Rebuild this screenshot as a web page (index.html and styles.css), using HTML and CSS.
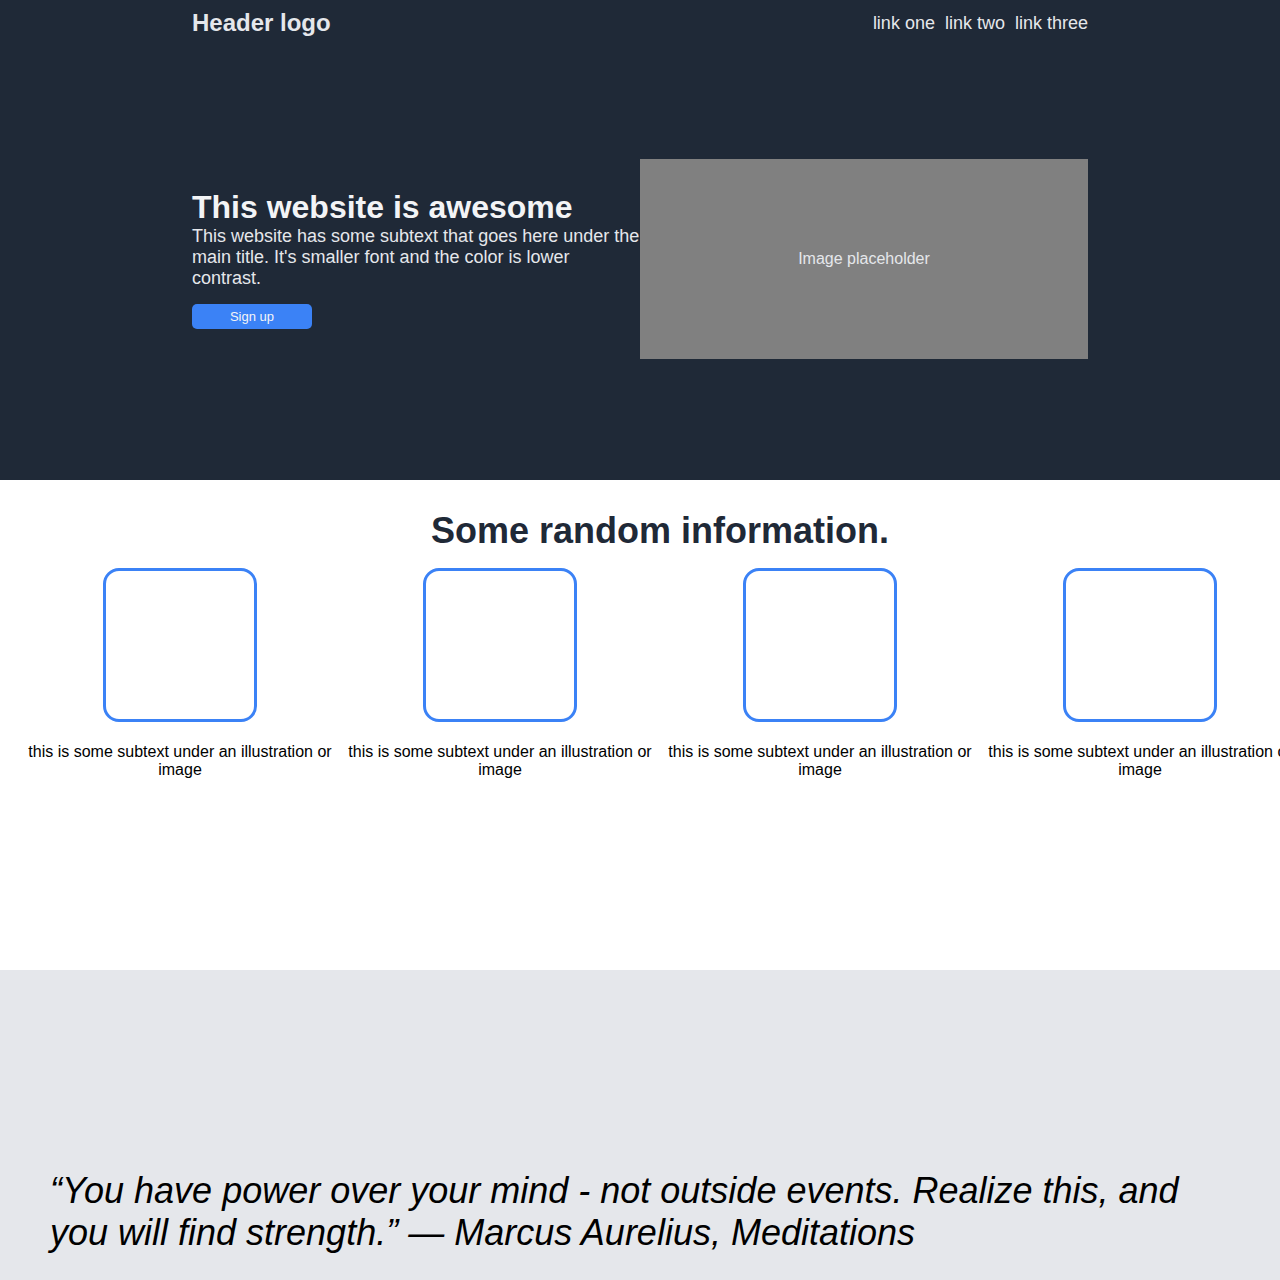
FILE: index.html
```html
<!DOCTYPE html>
<html lang="en">
<head>
<meta charset="utf-8">
<title>Landing page</title>
<link rel="stylesheet" href="styles.css">
</head>
<body>
<header class="top">
  <div class="container nav">
    <div class="logo">Header logo</div>
    <nav class="links">
      <a href="#">link one</a>
      <a href="#">link two</a>
      <a href="#">link three</a>
    </nav>
  </div>
  <div class="container hero">
    <div class="hero-text">
      <h1 class="hero-title">This website is awesome</h1>
      <p class="hero-sub">This website has some subtext that goes here under the main title. It's smaller font and the color is lower contrast.</p>
      <button class="signup">Sign up</button>
    </div>
    <div class="hero-image">Image placeholder</div>
  </div>
</header>
<section class="info">
  <h2 class="info-title">Some random information.</h2>
  <div class="info-items">
    <div class="item"><div class="box"></div><p class="item-text">this is some subtext under an illustration or image</p></div>
    <div class="item"><div class="box"></div><p class="item-text">this is some subtext under an illustration or image</p></div>
    <div class="item"><div class="box"></div><p class="item-text">this is some subtext under an illustration or image</p></div>
    <div class="item"><div class="box"></div><p class="item-text">this is some subtext under an illustration or image</p></div>
  </div>
</section>
<section class="quote-section">
  <p class="quote">“You have power over your mind - not outside events. Realize this, and you will find strength.” — Marcus Aurelius, Meditations</p>
</section>
</body>
</html>
```
FILE: styles.css
```css
html, body {
  margin: 0;
  padding: 0;
  overflow-x: hidden;
}
body {
  font-family: "Liberation Sans", Arial, sans-serif;
  color: #000;
}
.top {
  background: #1f2937;
  height: 480px;
}
.container {
  width: 896px;
  margin: 0 auto;
}
.nav {
  display: flex;
  justify-content: space-between;
  align-items: center;
  height: 44px;
  padding-top: 1px;
  box-sizing: border-box;
}
.logo {
  font-size: 24px;
  font-weight: bold;
  color: #e5e7eb;
}
.links {
  display: flex;
  gap: 10px;
  padding-top: 2px;
}
.links a {
  color: #e5e7eb;
  font-size: 18px;
  text-decoration: none;
}
.hero {
  display: flex;
  align-items: center;
  padding-top: 115px;
}
.hero-text {
  width: 448px;
}
.hero-title {
  margin: 0;
  font-size: 32px;
  font-weight: bold;
  color: #f3f4f6;
  line-height: 37px;
}
.hero-sub {
  margin: 0 0 15px;
  font-size: 18px;
  line-height: 21px;
  color: #e5e7eb;
}
.signup {
  width: 120px;
  height: 25px;
  border: none;
  border-radius: 5px;
  background: #3b82f6;
  color: #f3f4f6;
  font-family: "Liberation Sans", Arial, sans-serif;
  font-size: 13px;
  padding: 0;
  display: block;
}
.hero-image {
  width: 448px;
  height: 200px;
  background: #808080;
  color: #e5e7eb;
  font-size: 16px;
  display: flex;
  align-items: center;
  justify-content: center;
}
.info {
  background: #fff;
  height: 490px;
  box-sizing: border-box;
  padding-top: 30px;
}
.info-title {
  margin: 0 0 17px;
  padding-left: 40px;
  text-align: center;
  font-size: 36px;
  line-height: 41px;
  color: #1f2937;
}
.info-items {
  display: flex;
  padding-left: 20px;
}
.item {
  flex: 0 0 320px;
  display: flex;
  flex-direction: column;
  align-items: center;
}
.box {
  width: 148px;
  height: 148px;
  border: 3px solid #3b82f6;
  border-radius: 16px;
}
.item-text {
  margin: 21px 0 0;
  width: 310px;
  text-align: center;
  font-size: 16px;
  line-height: 18px;
}
.quote-section {
  background: #e5e7eb;
  padding: 200px 50px 40px;
}
.quote {
  margin: 0;
  font-size: 36px;
  font-style: italic;
  line-height: 42px;
  color: #000;
}
```
